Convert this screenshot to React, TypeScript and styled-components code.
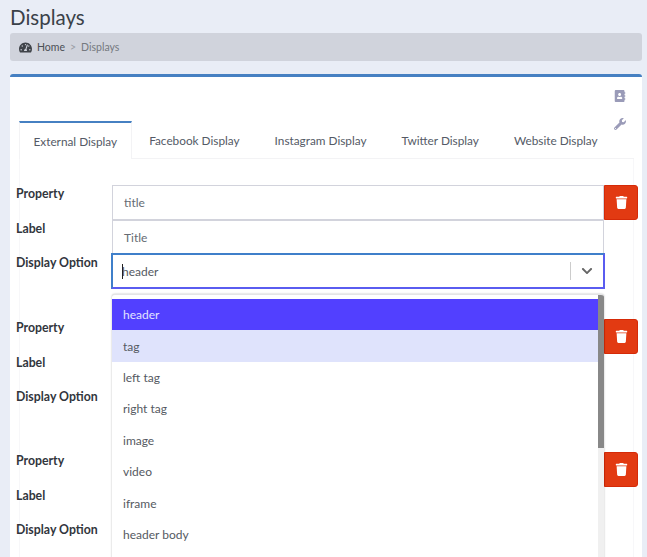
import React from "react";
import styled, { createGlobalStyle } from "styled-components";
import { FaAddressBook, FaChevronDown, FaTachometerAlt, FaTrash, FaWrench } from "react-icons/fa";

const Global = createGlobalStyle`
  html, body {
    margin: 0;
    height: 557px;
    overflow: hidden;
    background: #e9edf6;
    font-family: "Lato", "Noto Sans", sans-serif;
    color: #495057;
  }
`;

const Page = styled.div`
  padding: 5px 5px 0 10px;
`;

const Title = styled.h1`
  margin: 0 0 4px;
  font-size: 20.5px;
  line-height: 24px;
  font-weight: 400;
  color: #3a4149;
`;

const Breadcrumb = styled.nav`
  display: flex;
  align-items: center;
  height: 28px;
  padding-left: 9px;
  border-radius: 3px;
  background: #d0d3dc;
  font-size: 10.5px;
  color: #75797f;
`;

const Crumb = styled.span`
  color: #4b4f55;
  margin-left: 5px;
`;

const Sep = styled.span`
  margin: 0 5px;
  color: #9a9da5;
`;

const Card = styled.section`
  margin-top: 13px;
  height: 600px;
  padding: 0 9px;
  background: #fff;
  border-top: 3px solid #4680c2;
  border-radius: 3px 3px 0 0;
  position: relative;
`;

const Tools = styled.div`
  position: relative;
  z-index: 1;
  display: flex;
  flex-direction: column;
  align-items: flex-end;
  gap: 16px;
  box-sizing: border-box;
  height: 44px;
  padding: 13px 7px 0 0;
  color: #9a9bb8;
  font-size: 12px;

  svg {
    flex-shrink: 0;
  }
`;

const TabBar = styled.div`
  display: flex;
  width: 615px;
  height: 37px;
  border-bottom: 1px solid #f3f3f5;
`;

const Tab = styled.div<{ $active?: boolean }>`
  display: flex;
  align-items: center;
  justify-content: center;
  height: ${(p) => (p.$active ? "36px" : "35px")};
  padding: 0 ${(p) => (p.$active ? "13.5px" : "16.5px")};
  font-size: 11.8px;
  color: #545a66;
  background: #fff;
  border-top: 2px solid ${(p) => (p.$active ? "#4680c2" : "transparent")};
  border-left: 1px solid ${(p) => (p.$active ? "#f3f3f5" : "transparent")};
  border-right: 1px solid ${(p) => (p.$active ? "#f3f3f5" : "transparent")};
  white-space: nowrap;
`;

const Pane = styled.div`
  width: 615px;
  padding-top: 26px;
  box-sizing: border-box;
  border: 1px solid #f7f7f9;
  border-top: 0;
  height: 500px;
`;

const Group = styled.div`
  display: grid;
  grid-template-columns: 96px 492px 34px;
  grid-template-rows: 35px 34px 34px;
  margin: 0 0 30.5px -4px;
  position: relative;
`;

const Label = styled.label`
  font-size: 12.3px;
  font-weight: 700;
  color: #32363d;
  line-height: 17px;
  grid-column: 1;
`;

const Field = styled.div`
  grid-column: 2;
  box-sizing: border-box;
  height: 35px;
  display: flex;
  align-items: center;
  padding-left: 11px;
  font-size: 12px;
  color: #666b73;
  background: #fff;
  border: 1px solid #d2d3dc;
`;

const SelectBox = styled(Field)<{ $open?: boolean }>`
  position: relative;
  height: ${(p) => (p.$open ? "36px" : "35px")};
  margin: ${(p) => (p.$open ? "-1px -1px 0" : "0")};
  padding-left: 9px;
  color: #555a62;
  border: ${(p) => (p.$open ? "2px solid #5a5cf0" : "1px solid #d2d3dc")};
  border-top-color: ${(p) => (p.$open ? "#3f7fca" : "#d2d3dc")};
  border-left-color: ${(p) => (p.$open ? "#3f7fca" : "#d2d3dc")};
`;

const Caret = styled.span`
  position: absolute;
  left: 9px;
  top: 9px;
  width: 1px;
  height: 15px;
  background: #222;
`;

const Arrow = styled.span`
  display: flex;
  align-items: center;
  margin-left: auto;
  height: 18px;
  padding: 0 10px 0 10px;
  border-left: 1px solid #ccc;
  color: #666;
  font-size: 12px;
`;

const Trash = styled.button`
  grid-column: 3;
  grid-row: 1;
  height: 35px;
  padding: 0;
  display: flex;
  align-items: center;
  justify-content: center;
  color: #fff;
  font-size: 13px;
  background: #e23a12;
  border: 1px solid #d52a08;
  border-radius: 0 3px 3px 0;
`;

const Menu = styled.ul`
  position: absolute;
  left: 102px;
  top: 217px;
  width: 492px;
  height: 270px;
  margin: 0;
  padding: 4px 0 0;
  box-sizing: border-box;
  list-style: none;
  background: #fff;
  border-top: 1px solid #e4e4e6;
  border-radius: 3px 3px 0 0;
  box-shadow: 0 0 2px rgba(0, 0, 0, 0.3);
  overflow: hidden;
`;

const Option = styled.li<{ $state?: "selected" | "focus" }>`
  height: 31.4px;
  display: flex;
  align-items: center;
  padding-left: 11px;
  font-size: 12px;
  color: ${(p) => (p.$state === "selected" ? "#e2e3ff" : "#555a62")};
  background: ${(p) =>
    p.$state === "selected" ? "#5240ff" : p.$state === "focus" ? "#dfe3fc" : "transparent"};
`;

const Track = styled.div`
  position: absolute;
  right: 0;
  top: 0;
  bottom: 0;
  width: 6px;
  background: #f0f0f0;
`;

const Thumb = styled.div`
  height: 153px;
  background: #888;
`;

const tabs = ["Facebook Display", "Instagram Display", "Twitter Display", "Website Display"];
const options = ["left tag", "right tag", "image", "video", "iframe", "header body"];

// rows under the open menu have their values covered, so only the first one fills them in
const Row = ({ open }: { open?: boolean }) => (
  <Group>
    <Label>Property</Label>
    <Field>{open && "title"}</Field>
    <Trash aria-label="Delete">
      <FaTrash />
    </Trash>
    <Label>Label</Label>
    <Field>{open && "Title"}</Field>
    <Label>Display Option</Label>
    <SelectBox $open={open}>
      {open && <Caret />}
      {open && "header"}
      <Arrow>
        <FaChevronDown />
      </Arrow>
    </SelectBox>
  </Group>
);

export default function App() {
  return (
    <Page>
      <Global />
      <Title>Displays</Title>
      <Breadcrumb>
        <FaTachometerAlt color="#3f4349" size={13} />
        <Crumb>Home</Crumb>
        <Sep>&gt;</Sep>
        Displays
      </Breadcrumb>
      <Card>
        <Tools>
          <FaAddressBook />
          <FaWrench />
        </Tools>
        <TabBar>
          <Tab $active>External Display</Tab>
          {tabs.map((t) => (
            <Tab key={t}>{t}</Tab>
          ))}
        </TabBar>
        <Pane>
          <Row open />
          <Row />
          <Row />
        </Pane>
        <Menu>
          <Option $state="selected">header</Option>
          <Option $state="focus">tag</Option>
          {options.map((o) => (
            <Option key={o}>{o}</Option>
          ))}
          <Track>
            <Thumb />
          </Track>
        </Menu>
      </Card>
    </Page>
  );
}
